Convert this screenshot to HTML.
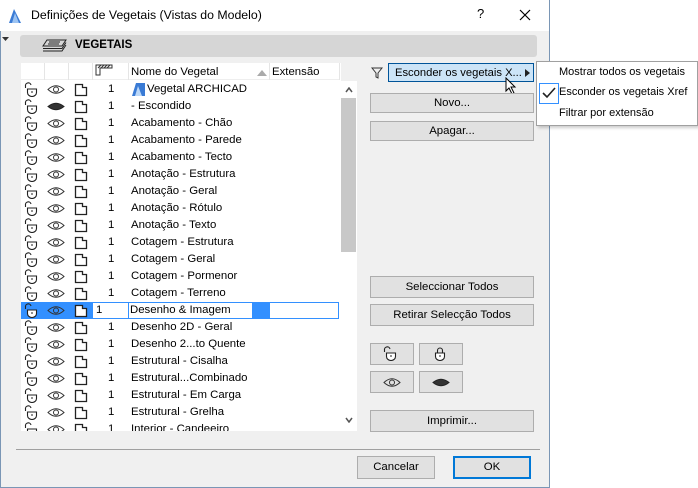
<!DOCTYPE html>
<html><head><meta charset="utf-8"><style>
*{margin:0;padding:0;box-sizing:border-box}
body{width:698px;height:488px;background:#fff;font-family:"Liberation Sans",sans-serif;font-size:11.4px;color:#000;position:relative;overflow:hidden}
.a{position:absolute;white-space:nowrap}
.dlg{left:0;top:0;width:550px;height:488px;background:#f0f0f0;border:1px solid #7a96b5;border-top:none}
.title{left:0;top:0;width:549px;height:31px;background:#fff}
.btn{position:absolute;background:#e1e1e1;border:1px solid #adadad;text-align:center;line-height:18px;white-space:nowrap;overflow:hidden}
.row{position:absolute;left:21px;width:320px;height:17px}
.row span{position:absolute;top:2px;white-space:nowrap}
.n{left:87px}
.t{left:110px}
svg{position:absolute}
</style></head><body>
<div class="a dlg"></div>
<div class="a title"></div>
<svg style="left:8px;top:8px" width="14" height="16" viewBox="0 0 14 16"><path d="M1 15 L6 1 L13 15 Z" fill="#3a7bd5"/><path d="M4 15 L7 5 L11 15Z" fill="#9cc3f2"/></svg>
<div class="a" style="left:31px;top:8px;font-size:12.3px">Definições de Vegetais (Vistas do Modelo)</div>
<div class="a" style="left:477px;top:6px;font-size:13px">?</div>
<svg style="left:519px;top:9px" width="12" height="12"><path d="M1 1L11 11M11 1L1 11" stroke="#000" stroke-width="1.2"/></svg>
<svg style="left:2px;top:37px" width="8" height="6"><path d="M0 0H7L3.5 4Z" fill="#333"/></svg>
<div class="a" style="left:20px;top:35px;width:517px;height:22px;background:#d6d6d6;border-radius:3px"></div>
<svg style="left:42px;top:38px" width="26" height="16"><path d="M5 2H24L20 8H1Z" fill="none" stroke="#222"/><path d="M1 10.5H20L24 4.5M1 13H20L24 7" fill="none" stroke="#222"/><path d="M7 4H18M6 6H17" stroke="#222"/></svg>
<div class="a" style="left:75px;top:39px;font-weight:bold;font-size:11.5px">VEGETAIS</div>

<div class="a" style="left:21px;top:63px;width:320px;height:368px;background:#fff"></div>
<div class="a" style="left:341px;top:81px;width:16px;height:350px;background:#fff"></div>
<div class="a" style="left:341px;top:98px;width:15px;height:154px;background:#c8c8c8"></div>
<svg style="left:345px;top:87px" width="8" height="6"><path d="M1 5L4 1L7 5" fill="none" stroke="#555" stroke-width="1.5"/></svg>
<svg style="left:345px;top:417px" width="8" height="6"><path d="M1 1L4 5L7 1" fill="none" stroke="#555" stroke-width="1.5"/></svg>
<div class="a" style="left:21px;top:63px;width:318px;height:17px;border-bottom:1px solid #eee"></div>
<div class="a" style="left:44px;top:63px;width:1px;height:17px;background:#e5e5e5"></div>
<div class="a" style="left:68px;top:63px;width:1px;height:17px;background:#e5e5e5"></div>
<div class="a" style="left:92px;top:63px;width:1px;height:17px;background:#e5e5e5"></div>
<div class="a" style="left:128px;top:63px;width:1px;height:17px;background:#e5e5e5"></div>
<div class="a" style="left:269px;top:63px;width:1px;height:17px;background:#e5e5e5"></div>
<div class="a" style="left:339px;top:63px;width:1px;height:17px;background:#e5e5e5"></div>
<svg style="left:95px;top:64px" width="18" height="12"><path d="M1 11V1H17V4H5V11Z" fill="#fff" stroke="#333"/><path d="M3 4L6 1M6 4L9 1M9 4L12 1M12 4L15 1" stroke="#333"/></svg>
<div class="a" style="left:131px;top:66px">Nome do Vegetal</div>
<svg style="left:257px;top:70px" width="10" height="6"><path d="M0 6L5 0L10 6Z" fill="#aaa"/></svg>
<div class="a" style="left:272px;top:66px">Extensão</div>

<svg width="0" height="0" style="position:absolute"><defs>
<g id="lk"><path d="M1.5 6V4A2.8 2.8 0 0 1 7 3" fill="none" stroke="#222" stroke-width="1.1"/><path d="M3.5 7H12.5V10.5A4.5 4 0 0 1 3.5 10.5Z" fill="#fff" stroke="#222" stroke-width="1.1"/><path d="M8 9V11" stroke="#222"/></g>
<g id="ey"><path d="M1 6.5Q9 -1 17 6.5Q9 14 1 6.5Z" fill="none" stroke="#333"/><circle cx="9" cy="6.5" r="2.5" fill="none" stroke="#333"/></g>
<g id="eh"><path d="M1 6.5Q9 0 17 6.5Q9 13 1 6.5Z" fill="#333" stroke="#222"/></g>
<g id="dc"><path d="M1.5 2.5H8.5V5.5H12.5V13.5H1.5Z" fill="#fff" stroke="#222" stroke-width="1.3"/></g>
</defs></svg>

<div class="a" style="left:21px;top:302px;width:318px;height:17px;background:#3390ff"></div>
<div class="a" style="left:93px;top:303px;width:35px;height:15px;background:#fff"></div>
<div class="a" style="left:129px;top:303px;width:123px;height:15px;background:#fff"></div>
<div class="a" style="left:270px;top:303px;width:68px;height:15px;background:#fff"></div>

<div style="position:absolute;left:0;top:0">
<div class="row" style="top:81px"><svg style="left:3px;top:1px" width="14" height="15"><use href="#lk"/></svg><svg style="left:26px;top:2px" width="18" height="13"><use href="#ey"/></svg><svg style="left:53px;top:1px" width="14" height="15"><use href="#dc"/></svg><span class="n">1</span><svg style="left:111px;top:2px" width="13" height="13"><path d="M0 13L4 0H13V13Z" fill="#3a7bd5"/><path d="M3 13L6 3L10 13Z" fill="#bcd8f8"/></svg><span class="t" style="left:126px">Vegetal ARCHICAD</span></div>
<div class="row" style="top:98px"><svg style="left:3px;top:1px" width="14" height="15"><use href="#lk"/></svg><svg style="left:26px;top:2px" width="18" height="13"><use href="#eh"/></svg><svg style="left:53px;top:1px" width="14" height="15"><use href="#dc"/></svg><span class="n">1</span><span class="t">- Escondido</span></div>
<div class="row" style="top:115px"><svg style="left:3px;top:1px" width="14" height="15"><use href="#lk"/></svg><svg style="left:26px;top:2px" width="18" height="13"><use href="#ey"/></svg><svg style="left:53px;top:1px" width="14" height="15"><use href="#dc"/></svg><span class="n">1</span><span class="t">Acabamento - Chão</span></div>
<div class="row" style="top:132px"><svg style="left:3px;top:1px" width="14" height="15"><use href="#lk"/></svg><svg style="left:26px;top:2px" width="18" height="13"><use href="#ey"/></svg><svg style="left:53px;top:1px" width="14" height="15"><use href="#dc"/></svg><span class="n">1</span><span class="t">Acabamento - Parede</span></div>
<div class="row" style="top:149px"><svg style="left:3px;top:1px" width="14" height="15"><use href="#lk"/></svg><svg style="left:26px;top:2px" width="18" height="13"><use href="#ey"/></svg><svg style="left:53px;top:1px" width="14" height="15"><use href="#dc"/></svg><span class="n">1</span><span class="t">Acabamento - Tecto</span></div>
<div class="row" style="top:166px"><svg style="left:3px;top:1px" width="14" height="15"><use href="#lk"/></svg><svg style="left:26px;top:2px" width="18" height="13"><use href="#ey"/></svg><svg style="left:53px;top:1px" width="14" height="15"><use href="#dc"/></svg><span class="n">1</span><span class="t">Anotação - Estrutura</span></div>
<div class="row" style="top:183px"><svg style="left:3px;top:1px" width="14" height="15"><use href="#lk"/></svg><svg style="left:26px;top:2px" width="18" height="13"><use href="#ey"/></svg><svg style="left:53px;top:1px" width="14" height="15"><use href="#dc"/></svg><span class="n">1</span><span class="t">Anotação - Geral</span></div>
<div class="row" style="top:200px"><svg style="left:3px;top:1px" width="14" height="15"><use href="#lk"/></svg><svg style="left:26px;top:2px" width="18" height="13"><use href="#ey"/></svg><svg style="left:53px;top:1px" width="14" height="15"><use href="#dc"/></svg><span class="n">1</span><span class="t">Anotação - Rótulo</span></div>
<div class="row" style="top:217px"><svg style="left:3px;top:1px" width="14" height="15"><use href="#lk"/></svg><svg style="left:26px;top:2px" width="18" height="13"><use href="#ey"/></svg><svg style="left:53px;top:1px" width="14" height="15"><use href="#dc"/></svg><span class="n">1</span><span class="t">Anotação - Texto</span></div>
<div class="row" style="top:234px"><svg style="left:3px;top:1px" width="14" height="15"><use href="#lk"/></svg><svg style="left:26px;top:2px" width="18" height="13"><use href="#ey"/></svg><svg style="left:53px;top:1px" width="14" height="15"><use href="#dc"/></svg><span class="n">1</span><span class="t">Cotagem - Estrutura</span></div>
<div class="row" style="top:251px"><svg style="left:3px;top:1px" width="14" height="15"><use href="#lk"/></svg><svg style="left:26px;top:2px" width="18" height="13"><use href="#ey"/></svg><svg style="left:53px;top:1px" width="14" height="15"><use href="#dc"/></svg><span class="n">1</span><span class="t">Cotagem - Geral</span></div>
<div class="row" style="top:268px"><svg style="left:3px;top:1px" width="14" height="15"><use href="#lk"/></svg><svg style="left:26px;top:2px" width="18" height="13"><use href="#ey"/></svg><svg style="left:53px;top:1px" width="14" height="15"><use href="#dc"/></svg><span class="n">1</span><span class="t">Cotagem - Pormenor</span></div>
<div class="row" style="top:285px"><svg style="left:3px;top:1px" width="14" height="15"><use href="#lk"/></svg><svg style="left:26px;top:2px" width="18" height="13"><use href="#ey"/></svg><svg style="left:53px;top:1px" width="14" height="15"><use href="#dc"/></svg><span class="n">1</span><span class="t">Cotagem - Terreno</span></div>
<div class="row" style="top:302px"><svg style="left:3px;top:1px" width="14" height="15"><use href="#lk"/></svg><svg style="left:26px;top:2px" width="18" height="13"><use href="#ey"/></svg><svg style="left:53px;top:1px" width="14" height="15"><use href="#dc"/></svg><span style="left:75px">1</span><span style="left:109px">Desenho &amp; Imagem</span></div>
<div class="row" style="top:319px"><svg style="left:3px;top:1px" width="14" height="15"><use href="#lk"/></svg><svg style="left:26px;top:2px" width="18" height="13"><use href="#ey"/></svg><svg style="left:53px;top:1px" width="14" height="15"><use href="#dc"/></svg><span class="n">1</span><span class="t">Desenho 2D - Geral</span></div>
<div class="row" style="top:336px"><svg style="left:3px;top:1px" width="14" height="15"><use href="#lk"/></svg><svg style="left:26px;top:2px" width="18" height="13"><use href="#ey"/></svg><svg style="left:53px;top:1px" width="14" height="15"><use href="#dc"/></svg><span class="n">1</span><span class="t">Desenho 2...to Quente</span></div>
<div class="row" style="top:353px"><svg style="left:3px;top:1px" width="14" height="15"><use href="#lk"/></svg><svg style="left:26px;top:2px" width="18" height="13"><use href="#ey"/></svg><svg style="left:53px;top:1px" width="14" height="15"><use href="#dc"/></svg><span class="n">1</span><span class="t">Estrutural - Cisalha</span></div>
<div class="row" style="top:370px"><svg style="left:3px;top:1px" width="14" height="15"><use href="#lk"/></svg><svg style="left:26px;top:2px" width="18" height="13"><use href="#ey"/></svg><svg style="left:53px;top:1px" width="14" height="15"><use href="#dc"/></svg><span class="n">1</span><span class="t">Estrutural...Combinado</span></div>
<div class="row" style="top:387px"><svg style="left:3px;top:1px" width="14" height="15"><use href="#lk"/></svg><svg style="left:26px;top:2px" width="18" height="13"><use href="#ey"/></svg><svg style="left:53px;top:1px" width="14" height="15"><use href="#dc"/></svg><span class="n">1</span><span class="t">Estrutural - Em Carga</span></div>
<div class="row" style="top:404px"><svg style="left:3px;top:1px" width="14" height="15"><use href="#lk"/></svg><svg style="left:26px;top:2px" width="18" height="13"><use href="#ey"/></svg><svg style="left:53px;top:1px" width="14" height="15"><use href="#dc"/></svg><span class="n">1</span><span class="t">Estrutural - Grelha</span></div>
<div class="row" style="top:421px;height:10px;overflow:hidden"><svg style="left:3px;top:1px" width="14" height="15"><use href="#lk"/></svg><svg style="left:26px;top:2px" width="18" height="13"><use href="#ey"/></svg><svg style="left:53px;top:1px" width="14" height="15"><use href="#dc"/></svg><span class="n">1</span><span class="t">Interior - Candeeiro</span></div>
</div>

<svg style="left:371px;top:67px" width="12" height="12"><path d="M1 1H11L7 6V11L5 10V6Z" fill="none" stroke="#333"/></svg>
<div class="btn" style="left:388px;top:63px;width:146px;height:19px;background:#cce4f7;border-color:#005499;text-align:left;padding-left:6px;font-size:11.2px">Esconder os vegetais X...</div>
<svg style="left:525px;top:69px" width="5" height="8"><path d="M0 0L5 4L0 8Z" fill="#222"/></svg>
<svg style="left:505px;top:77px" width="12" height="18"><path d="M1 1V14L4 11L7 17L9 16L6 10H10Z" fill="#fff" stroke="#000"/></svg>
<div class="btn" style="left:370px;top:93px;width:164px;height:20px">Novo...</div>
<div class="btn" style="left:370px;top:121px;width:164px;height:20px">Apagar...</div>
<div class="btn" style="left:370px;top:276px;width:164px;height:22px;line-height:20px">Seleccionar Todos</div>
<div class="btn" style="left:370px;top:304px;width:164px;height:22px;line-height:20px">Retirar Selecção Todos</div>
<div class="btn" style="left:370px;top:343px;width:44px;height:22px"></div>
<div class="btn" style="left:419px;top:343px;width:44px;height:22px"></div>
<div class="btn" style="left:370px;top:371px;width:44px;height:22px"></div>
<div class="btn" style="left:419px;top:371px;width:44px;height:22px"></div>
<svg style="left:383px;top:346px" width="14" height="15"><use href="#lk"/></svg>
<svg style="left:433px;top:346px" width="14" height="15"><path d="M4.5 7V4.5A2.5 2.5 0 0 1 9.5 4.5V7" fill="none" stroke="#222" stroke-width="1.1"/><path d="M2.5 7H11.5V10.5A4.5 4 0 0 1 2.5 10.5Z" fill="#fff" stroke="#222" stroke-width="1.1"/><path d="M7 9V11" stroke="#222"/></svg>
<svg style="left:383px;top:376px" width="18" height="13"><use href="#ey"/></svg>
<svg style="left:432px;top:376px" width="18" height="13"><use href="#eh"/></svg>
<div class="btn" style="left:370px;top:410px;width:164px;height:22px;line-height:20px">Imprimir...</div>
<div class="a" style="left:16px;top:449px;width:524px;height:1px;background:#a0a0a0"></div>
<div class="btn" style="left:357px;top:456px;width:78px;height:23px;line-height:21px">Cancelar</div>
<div class="btn" style="left:453px;top:456px;width:78px;height:23px;line-height:19px;border:2px solid #0078d7">OK</div>

<div class="a" style="left:536px;top:61px;width:162px;height:65px;background:#fff;border:1px solid #a0a0a0;box-shadow:2px 2px 3px rgba(0,0,0,.2)"></div>
<div class="a" style="left:559px;top:66px;font-size:11px">Mostrar todos os vegetais</div>
<div class="a" style="left:539px;top:83px;width:20px;height:21px;border:1px solid #3390ff;background:#fff"></div>
<svg style="left:542px;top:86px" width="14" height="14"><path d="M1 7L5 11L13 2" fill="none" stroke="#222" stroke-width="1.6"/></svg>
<div class="a" style="left:559px;top:86px;font-size:11px">Esconder os vegetais Xref</div>
<div class="a" style="left:559px;top:107px;font-size:11px">Filtrar por extensão</div>
</body></html>
